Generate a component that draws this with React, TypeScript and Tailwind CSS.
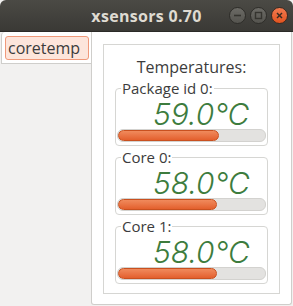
import React from 'react'

interface Sensor {
  label: string
  temp: string
  fill: number
}

const sensors: Sensor[] = [
  { label: 'Package id 0:', temp: '59.0°C', fill: 101 },
  { label: 'Core 0:', temp: '58.0°C', fill: 99 },
  { label: 'Core 1:', temp: '58.0°C', fill: 99 },
]

const TitleButton: React.FC<{ kind: 'min' | 'max' | 'close' }> = ({ kind }) => {
  const close = kind === 'close'
  return (
    <div
      className={
        close
          ? 'w-[17px] h-[17px] rounded-full flex items-center justify-center bg-gradient-to-b from-[#f37a4e] to-[#e2531d] border border-[#3a2a22]'
          : 'w-[17px] h-[17px] rounded-full flex items-center justify-center bg-gradient-to-b from-[#6b6a65] to-[#55544f] border border-[#2e2d29]'
      }
    >
      <svg width="9" height="9" viewBox="0 0 9 9">
        {kind === 'min' && <line x1="1" y1="4.5" x2="8" y2="4.5" stroke="#35342f" strokeWidth="1.6" />}
        {kind === 'max' && <rect x="1.5" y="1.5" width="6" height="6" fill="none" stroke="#35342f" strokeWidth="1.4" />}
        {kind === 'close' && (
          <g stroke="#3a2a20" strokeWidth="1.5">
            <line x1="2" y1="2" x2="7" y2="7" />
            <line x1="7" y1="2" x2="2" y2="7" />
          </g>
        )}
      </svg>
    </div>
  )
}

const SensorFrame: React.FC<{ sensor: Sensor }> = ({ sensor }) => (
  <fieldset className="border border-[#d6d6d3] rounded-[4px] px-[1px] pb-[3px]">
    <legend className="ml-[4px] px-[1px] text-[15px] leading-[18px] text-[#3c3c3c]">
      {sensor.label}
    </legend>
    <div className="h-[32px] leading-[34px] pl-[36px] text-[30px] font-light text-[#3d7c3d] italic [font-family:Inter,sans-serif]">
      {sensor.temp}
    </div>
    <div className="h-[13px] rounded-[6px] bg-[#e3e2e0] border border-[#d3d2cf] overflow-hidden">
      <div
        className="h-full rounded-[6px] bg-gradient-to-b from-[#f08a5c] to-[#e35f2c] border border-[#c9501f]"
        style={{ width: sensor.fill }}
      />
    </div>
  </fieldset>
)

const App: React.FC = () => {
  return (
    <div className="w-[293px] h-[306px] flex flex-col bg-[#f2f1f0] [font-family:'Open_Sans',sans-serif] overflow-hidden">
      <div className="h-[32px] grid grid-cols-[1fr_auto_1fr] items-center bg-gradient-to-b from-[#4b4a45] to-[#3a3935] rounded-t-[6px] border-b border-[#2b2a27]">
        <div />
        <div className="text-[16px] font-bold text-[#dfdbd2] leading-[20px] tracking-[0.3px]">
          xsensors 0.70
        </div>
        <div className="flex justify-end gap-[4px] pr-[5px]">
          <TitleButton kind="min" />
          <TitleButton kind="max" />
          <TitleButton kind="close" />
        </div>
      </div>
      <div className="flex-1 flex pb-[1px] pr-[1px]">
        <div className="w-[91px] flex flex-col">
          <div className="h-[32px] ml-[1px] bg-white rounded-tl-[4px] border-l border-b border-[#cfcecb] flex items-center pl-[3px]">
            <div className="h-[24px] w-[84px] flex items-center pl-[2px] bg-[#fde5db] border border-[#f0997a] rounded-[3px] text-[16px] text-[#3c3c3c]">
              coretemp
            </div>
          </div>
        </div>
        <div className="flex-1 bg-white border border-l-[#cfcecb] border-t-0 border-r-[#cfcecb] border-b-[#cfcecb] rounded-b-[3px] pt-[12px] px-[11px] pb-[10px]">
          <div className="h-full border border-[#d6d6d3] flex flex-col px-[11px] pb-[9px]">
            <div className="pt-[12px] mb-[2px] text-center text-[16px] leading-[20px] text-[#3c3c3c]">
              Temperatures:
            </div>
            <div className="flex flex-col gap-[2px]">
              {sensors.map((s) => (
                <SensorFrame key={s.label} sensor={s} />
              ))}
            </div>
          </div>
        </div>
      </div>
    </div>
  )
}

export default App
